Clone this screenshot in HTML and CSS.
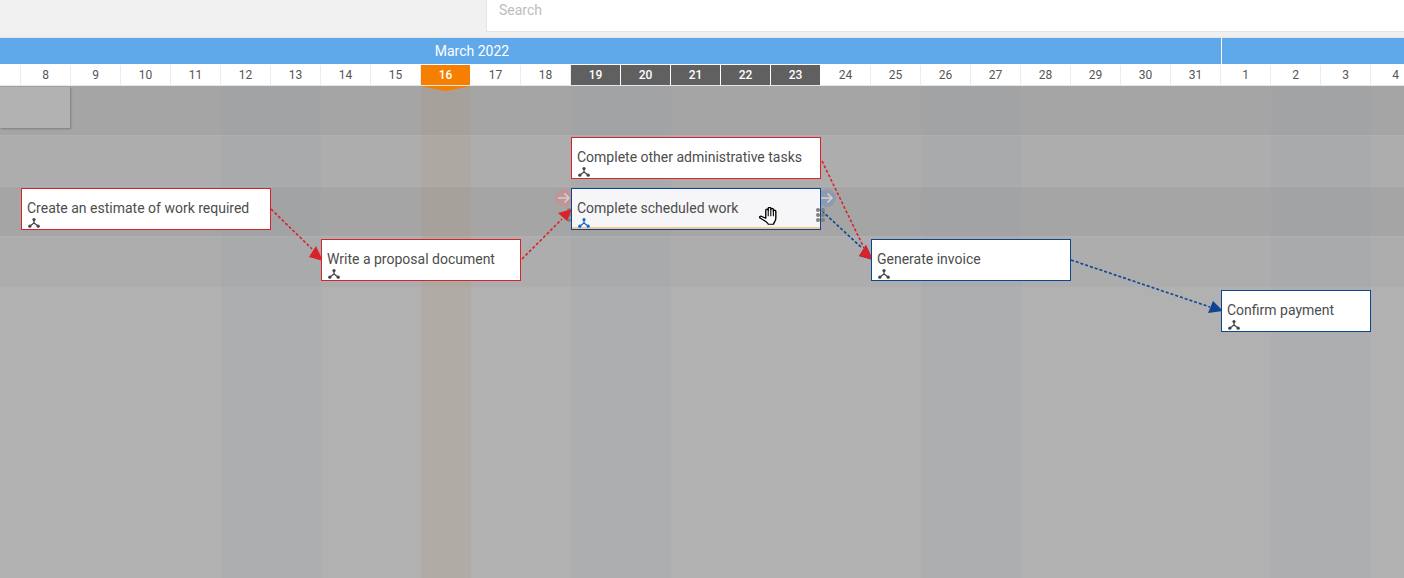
FILE: index.html
```html
<!DOCTYPE html>
<html lang="en">
    <head>
        <meta charset="UTF-8" />
        <title>Schedule</title>
        <link rel="stylesheet" href="styles.css">
    </head>
    <body>
        <header class="topbar">
            <div class="search">Search</div>
        </header>
        <div class="months">
            <div class="month march"><span>March 2022</span></div>
            <div class="month"></div>
        </div>
        <div class="days">
            <div class="day"></div>
            <div class="day">8</div>
            <div class="day">9</div>
            <div class="day">10</div>
            <div class="day">11</div>
            <div class="day">12</div>
            <div class="day">13</div>
            <div class="day">14</div>
            <div class="day">15</div>
            <div class="day today">16</div>
            <div class="day">17</div>
            <div class="day">18</div>
            <div class="day dark">19</div>
            <div class="day dark">20</div>
            <div class="day dark">21</div>
            <div class="day dark">22</div>
            <div class="day dark">23</div>
            <div class="day">24</div>
            <div class="day">25</div>
            <div class="day">26</div>
            <div class="day">27</div>
            <div class="day">28</div>
            <div class="day">29</div>
            <div class="day">30</div>
            <div class="day">31</div>
            <div class="day">1</div>
            <div class="day">2</div>
            <div class="day">3</div>
            <div class="day">4</div>
        </div>
        <main class="chart">
            <div class="row row-dark row-a"></div>
            <div class="row row-light row-b"></div>
            <div class="row row-dark row-a"></div>
            <div class="row row-light row-b"></div>

            <div class="band band-12"></div>
            <div class="band band-19"></div>
            <div class="band band-26"></div>
            <div class="band band-2"></div>
            <div class="band band-today"></div>
            <div class="today-tip"></div>
            <div class="stub"></div>

            <div class="handle handle-in">
                <svg width="18" height="18" viewBox="0 0 18 18"><path d="M3 9h11M9.500 4.500 14 9l-4.500 4.500" /></svg>
            </div>
            <div class="handle handle-out">
                <svg width="18" height="18" viewBox="0 0 18 18"><path d="M3 9h11M9.500 4.500 14 9l-4.500 4.500" /></svg>
            </div>
            <div class="grip grip-in">
                <i></i><i></i><i></i><i></i><i></i><i></i>
            </div>

            <svg class="links" width="1404" height="492" viewBox="0 0 1404 492">
                <g class="link-blue">
                    <line x1="822" y1="125" x2="862" y2="162" />
                    <polygon points="873,174 859,170 866,159" />
                    <line x1="1071" y1="174" x2="1210" y2="221" />
                    <polygon points="1223,225 1208,227 1213,215" />
                </g>
                <g class="link-red">
                    <line x1="271" y1="123" x2="312" y2="163" />
                    <polygon points="323,175 309,171 316,160" />
                    <line x1="522" y1="173" x2="562" y2="133" />
                    <polygon points="572,123 567,135 558,127" />
                    <line x1="822" y1="75" x2="864" y2="162" />
                    <polygon points="873,174 859,170 866,159" />
                </g>
            </svg>

            <div class="task task-red t-estimate">
                <span class="name">Create an estimate of work required</span>
                <svg class="tree" width="12" height="12" viewBox="0 0 12 12"><path d="M6 2.500V6L2 9M6 6l4 3" /><circle cx="6" cy="2.500" r="1.600" /><circle cx="1.800" cy="9.200" r="1.600" /><circle cx="10.200" cy="9.200" r="1.600" /></svg>
            </div>
            <div class="task task-red t-proposal">
                <span class="name">Write a proposal document</span>
                <svg class="tree" width="12" height="12" viewBox="0 0 12 12"><path d="M6 2.500V6L2 9M6 6l4 3" /><circle cx="6" cy="2.500" r="1.600" /><circle cx="1.800" cy="9.200" r="1.600" /><circle cx="10.200" cy="9.200" r="1.600" /></svg>
            </div>
            <div class="task task-red t-admin">
                <span class="name">Complete other administrative tasks</span>
                <svg class="tree" width="12" height="12" viewBox="0 0 12 12"><path d="M6 2.500V6L2 9M6 6l4 3" /><circle cx="6" cy="2.500" r="1.600" /><circle cx="1.800" cy="9.200" r="1.600" /><circle cx="10.200" cy="9.200" r="1.600" /></svg>
            </div>
            <div class="task task-blue task-active t-scheduled">
                <span class="name">Complete scheduled work</span>
                <svg class="tree" width="12" height="12" viewBox="0 0 12 12"><path d="M6 2.500V6L2 9M6 6l4 3" /><circle cx="6" cy="2.500" r="1.600" /><circle cx="1.800" cy="9.200" r="1.600" /><circle cx="10.200" cy="9.200" r="1.600" /></svg>
            </div>
            <div class="task task-blue t-invoice">
                <span class="name">Generate invoice</span>
                <svg class="tree" width="12" height="12" viewBox="0 0 12 12"><path d="M6 2.500V6L2 9M6 6l4 3" /><circle cx="6" cy="2.500" r="1.600" /><circle cx="1.800" cy="9.200" r="1.600" /><circle cx="10.200" cy="9.200" r="1.600" /></svg>
            </div>
            <div class="task task-blue t-payment">
                <span class="name">Confirm payment</span>
                <svg class="tree" width="12" height="12" viewBox="0 0 12 12"><path d="M6 2.500V6L2 9M6 6l4 3" /><circle cx="6" cy="2.500" r="1.600" /><circle cx="1.800" cy="9.200" r="1.600" /><circle cx="10.200" cy="9.200" r="1.600" /></svg>
            </div>

            <div class="grip grip-out">
                <i></i><i></i><i></i><i></i><i></i><i></i>
            </div>

            <svg class="hand" width="19" height="19" viewBox="1.500 2 14 16" preserveAspectRatio="none">
                <path d="M6.500 11.500V4.800c0-1.300 1.800-1.300 1.800 0V3.300c0-1.300 1.900-1.300 1.900 0v.8c0-1.300 1.900-1.300 1.900 0v1.400c0-1.200 1.800-1.200 1.800 0v5.700c0 1.500-.3 2.300-.9 3.300-.5.9-.8 1.500-.8 2H8.300c-.2-.9-1-1.500-2-2.500L2.300 11.300c-.9-1 .4-2.100 1.300-1.300z" />
                <path class="hand-lines" d="M8.300 4.800v5M10.200 4v5.800M12.100 4.200v5.600" />
            </svg>
        </main>
    </body>
</html>
```

FILE: styles.css
```css
* {
    box-sizing: border-box;
    margin: 0;
    padding: 0;
}
html,
body {
    height: 100%;
    overflow: hidden;
}
body {
    font-family: Roboto, "Liberation Sans", sans-serif;
    font-size: 14px;
    color: #4d4d4d;
    background: #b1b1b1;
    display: flex;
    flex-direction: column;
}
.topbar {
    height: 38px;
    background: #f0f0f0;
    border-bottom: 1px solid #e4e4e4;
    padding-left: 486px;
    flex: none;
}
.search {
    height: 33px;
    margin-top: -1px;
    padding: 0 12px;
    line-height: 20px;
    color: #bdbdbd;
    background: #fff;
    border: 1px solid #e4e4e4;
    border-right: 0;
}
.months {
    display: grid;
    grid-template-columns: 1222px 1fr;
    height: 27px;
    flex: none;
    background: #fff;
}
.month {
    background: #5fa8e9;
    color: #fff;
    height: 26px;
    line-height: 26px;
}
.month.march {
    border-right: 1px solid #fff;
    text-align: center;
    padding-right: 277px;
}
.days {
    display: grid;
    grid-template-columns: 20.5px repeat(28, 50px);
    height: 21px;
    flex: none;
    background: #fff;
    border-bottom: 1px solid #e6e6e6;
    font-size: 12px;
    position: relative;
    z-index: 2;
}
.day {
    border-right: 1px solid #ececec;
    padding-left: 1px;
    text-align: center;
    line-height: 20px;
    color: #555;
}
.day.dark {
    background: #606060;
    color: #fff;
    font-weight: 500;
    border-right-color: #fff;
}
.day.today {
    background: #f77f00;
    color: #fff;
    font-weight: 500;
    border-right-color: #fff;
}
.chart {
    position: relative;
    flex: 1;
}
.row {
    border-bottom: 1px solid #b1b1b1;
}
.row-a {
    height: 50px;
}
.row-b {
    height: 51px;
}
.row-dark {
    background: #a5a5a5;
}
.row-light {
    background: #adadad;
}
.band {
    position: absolute;
    top: 0;
    bottom: 0;
    width: 100px;
    background: rgba(120, 140, 170, 0.08);
}
.band-12 {
    left: 221px;
}
.band-19 {
    left: 571px;
}
.band-26 {
    left: 921px;
}
.band-2 {
    left: 1271px;
}
.band-today {
    left: 421px;
    width: 50px;
    background: rgba(170, 130, 80, 0.12);
}
.today-tip {
    position: absolute;
    left: 421px;
    top: -1px;
    width: 49px;
    height: 6px;
    background: #f77f00;
    clip-path: polygon(0 0, 100% 0, 100% 20%, 50% 100%, 0 20%);
}
.stub {
    position: absolute;
    left: 0;
    top: 1px;
    width: 70px;
    height: 41px;
    background: #b2b2b2;
    box-shadow: 1px 1px 2px rgba(0, 0, 0, 0.25);
}
.links {
    position: absolute;
    left: 0;
    top: 0;
}
.links line {
    stroke-width: 1.600;
    stroke-dasharray: 3 2;
}
.link-red line {
    stroke: #d8232a;
}
.link-red polygon {
    fill: #d8232a;
}
.link-blue line {
    stroke: #0d4592;
}
.link-blue polygon {
    fill: #0d4592;
}
.handle {
    position: absolute;
    width: 18px;
    height: 18px;
    top: 103px;
    border-radius: 50%;
}
.handle svg {
    display: block;
}
.handle path {
    fill: none;
    stroke: #d4d0d0;
    stroke-width: 1.500;
}
.handle-in {
    left: 555px;
    background: #c19595;
}
.handle-out {
    left: 818px;
    background: #8c9bb0;
}
.grip {
    position: absolute;
    top: 122px;
    display: grid;
    grid-template-columns: 4px 4px;
    gap: 1px;
}
.grip-in {
    left: 567px;
}
.grip-out {
    left: 816px;
}
.grip i {
    width: 4px;
    height: 4px;
    border-radius: 50%;
    background: #808080;
}
.task {
    position: absolute;
    width: 250px;
    height: 42px;
    background: #fff;
    border: 1px solid;
    padding: 10px 5px 0;
    line-height: 18px;
    white-space: nowrap;
}
.task-red {
    border-color: #d8232a;
}
.task-blue {
    border-color: #0d4592;
}
.name {
    display: block;
    height: 18px;
}
.tree {
    display: block;
    margin-left: 0.5px;
    fill: #444;
}
.tree path {
    fill: none;
    stroke: #444;
    stroke-width: 1.300;
}
.task-active {
    background: #f6f6f8;
    box-shadow: inset 0 -2px 0 #f5c98a;
}
.task-active .tree {
    fill: #1668c7;
}
.task-active .tree path {
    stroke: #1668c7;
}
.t-estimate {
    left: 21px;
    top: 102px;
}
.t-proposal {
    left: 321px;
    width: 200px;
    top: 153px;
}
.t-admin {
    left: 571px;
    top: 51px;
}
.t-scheduled {
    left: 571px;
    top: 102px;
}
.t-invoice {
    left: 871px;
    width: 200px;
    top: 153px;
}
.t-payment {
    left: 1221px;
    width: 150px;
    top: 204px;
}
.hand {
    position: absolute;
    left: 759px;
    top: 121px;
}
.hand path {
    fill: #fff;
    stroke: #000;
    stroke-width: 1;
    stroke-linejoin: round;
}
.hand .hand-lines {
    fill: none;
    stroke-width: 0.800;
}
```
